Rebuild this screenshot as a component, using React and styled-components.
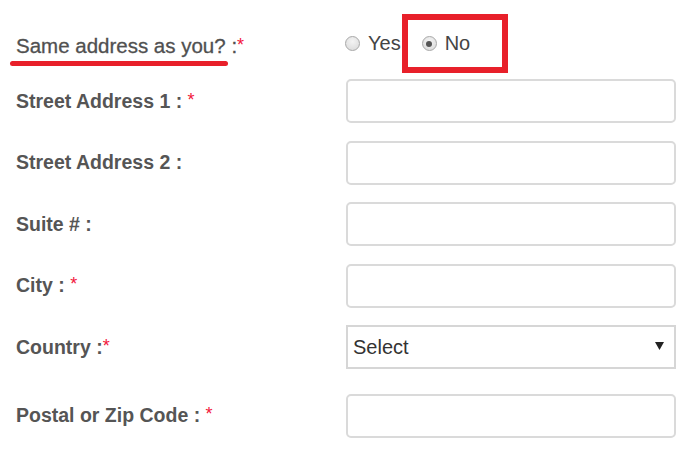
import React, { useState } from "react"
import styled, { createGlobalStyle } from 'styled-components'

const GlobalStyle = createGlobalStyle`
  body {
    margin: 0;
    background: #fff;
    font-family: 'Liberation Sans', Arial, sans-serif;
  }
`

const Form = styled.form`
  display: flex;
  flex-direction: column;
  gap: 17.5px;
  padding: 14px 0 0 16px;
  width: 660px;
`

const Row = styled.div`
  display: flex;
  align-items: center;
  margin-top: ${p => p.$pushDown || 0}px;
  margin-bottom: ${p => p.$pushUp || 0}px;
`

const Label = styled.label`
  width: 330px;
  flex-shrink: 0;
  font-size: 19.5px;
  font-weight: bold;
  color: #555;
`

const QuestionLabel = styled.div`
  width: 329px;
  flex-shrink: 0;
  font-size: 20.5px;
  color: #505050;
  padding-top: 4px;
  -webkit-text-stroke: 0.3px #505050;
`

const Underlined = styled.span`
  position: relative;
  &::after {
    content: '';
    position: absolute;
    left: -6px;
    right: -2px;
    bottom: -9px;
    height: 5px;
    border-radius: 3px;
    background: #e8202a;
  }
`

const Required = styled.span`
  color: #f2163c;
  font-weight: normal;
  font-size: 18px;
  vertical-align: 2px;
  -webkit-text-stroke: 0;
`

const RadioGroup = styled.div`
  display: flex;
  align-items: center;
`

const RadioOption = styled.label`
  display: flex;
  align-items: center;
  gap: 8px;
  font-size: 20px;
  color: #444;
  height: ${p => (p.$highlighted ? 47 : 59)}px;
  padding: ${p => (p.$highlighted ? '0 32px 0 14px' : '0 1px 0 0')};
  border: ${p => (p.$highlighted ? '6px solid #e8202a' : 'none')};
`

const Radio = styled.input`
  appearance: none;
  margin: 0;
  width: 15px;
  height: 15px;
  border-radius: 50%;
  border: 1px solid #a8a8a8;
  background: radial-gradient(circle at 50% 35%, #f4f4f4 0%, #d8d8d8 100%);
  position: relative;
  &:checked::after {
    content: '';
    position: absolute;
    top: 3.5px;
    left: 3.5px;
    width: 6px;
    height: 6px;
    border-radius: 50%;
    background: #555;
  }
`

const TextInput = styled.input`
  box-sizing: border-box;
  width: 331px;
  height: 44px;
  border: 2px solid #dadada;
  border-radius: 5px;
  padding: 0 8px;
  font-size: 19px;
  font-family: inherit;
  outline: none;
`

const SelectWrap = styled.div`
  position: relative;
  width: 331px;
  height: 44px;
`

const Select = styled.select`
  appearance: none;
  box-sizing: border-box;
  width: 100%;
  height: 100%;
  border: 2px solid #d6d6d6;
  border-radius: 0;
  background: #fff;
  padding: 0 5px;
  font-size: 20px;
  font-family: inherit;
  color: #333;
  outline: none;
`

const Arrow = styled.svg`
  position: absolute;
  right: 12px;
  top: 17px;
  pointer-events: none;
`

const fields = [
  { label: 'Street Address 1 : ', req: true },
  { label: 'Street Address 2 :', req: false },
  { label: 'Suite # :', req: false },
  { label: 'City : ', req: true },
]

export default () => {
  const [same, setSame] = useState('no')

  return <>
    <GlobalStyle />
    <Form action='#' onSubmit={e => e.preventDefault()}>
      <Row $pushUp={-11.5}>
        <QuestionLabel>
          <Underlined>Same address as you?</Underlined> :<Required>*</Required>
        </QuestionLabel>
        <RadioGroup>
          <RadioOption>
            <Radio type='radio' name='same' checked={same === 'yes'} onChange={() => setSame('yes')} />
            Yes
          </RadioOption>
          <RadioOption $highlighted>
            <Radio type='radio' name='same' checked={same === 'no'} onChange={() => setSame('no')} />
            No
          </RadioOption>
        </RadioGroup>
      </Row>
      {fields.map(f => (
        <Row key={f.label}>
          <Label>{f.label}{f.req && <Required>*</Required>}</Label>
          <TextInput type='text' />
        </Row>
      ))}
      <Row>
        <Label>Country :<Required>*</Required></Label>
        <SelectWrap>
          <Select defaultValue=''>
            <option value=''>Select</option>
          </Select>
          <Arrow width='9' height='8' viewBox='0 0 9 8'>
            <path d='M0 0 H9 L4.5 8 Z' fill='#222' />
          </Arrow>
        </SelectWrap>
      </Row>
      <Row $pushDown={7}>
        <Label>Postal or Zip Code : <Required>*</Required></Label>
        <TextInput type='text' />
      </Row>
    </Form>
  </>
}
